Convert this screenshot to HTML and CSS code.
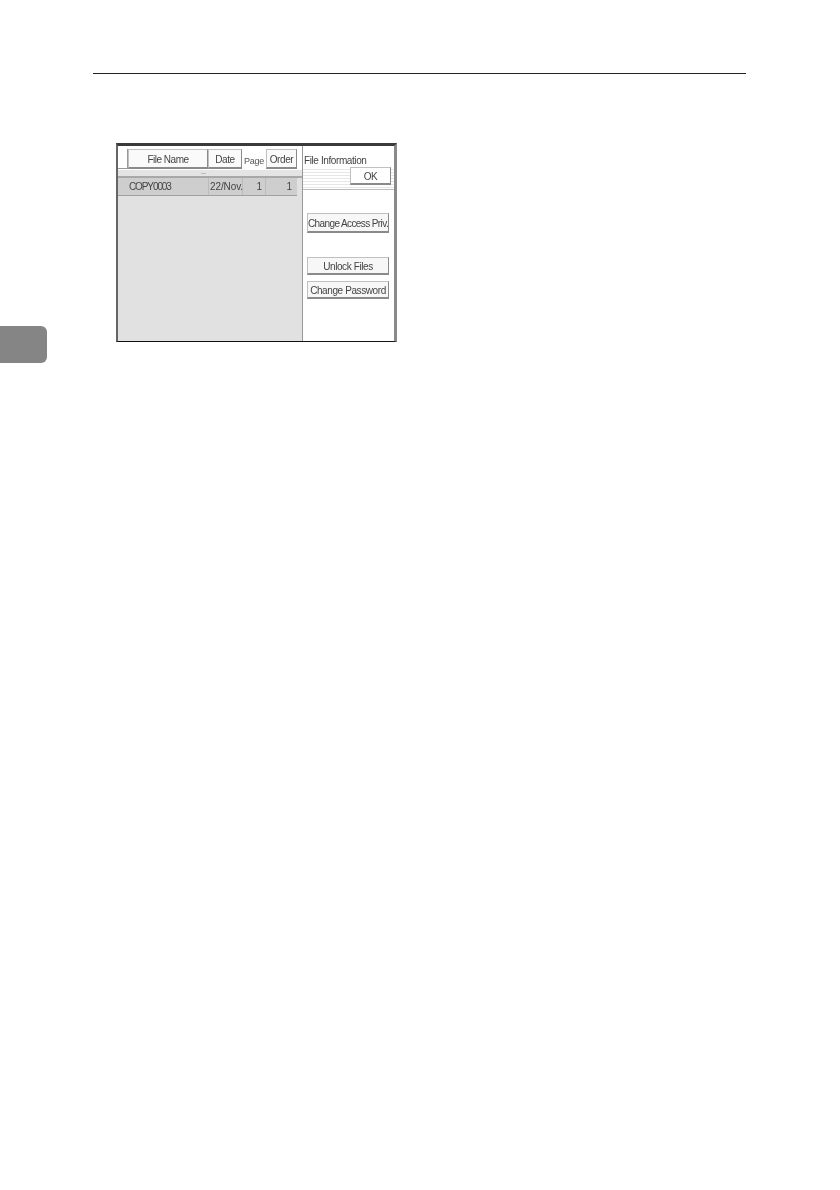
FILE: index.html
```html
<!DOCTYPE html>
<html lang="en">
<head>
<meta charset="utf-8">
<title>File Information</title>
<link rel="stylesheet" href="styles.css">
</head>
<body>
<div class="page">
  <div class="rule"></div>
  <div class="screen">
    <div class="list">
      <div class="heads">
        <span class="stub"></span>
        <span class="btn head name">File Name</span>
        <span class="btn head date">Date</span>
        <span class="page-label">Page</span>
        <span class="btn head order">Order</span>
      </div>
      <div class="sort"><span class="caret"></span></div>
      <div class="row">
        <span class="cell c-name">COPY0003</span>
        <span class="cell c-date">22/Nov.</span>
        <span class="cell c-page">1</span>
        <span class="cell c-order">1</span>
      </div>
    </div>
    <div class="info">
      <div class="info-title">File Information</div>
      <div class="ok-band"><span class="btn ok">OK</span></div>
      <div class="actions">
        <span class="btn action first">Change Access Priv.</span>
        <span class="btn action second">Unlock Files</span>
        <span class="btn action">Change Password</span>
      </div>
    </div>
  </div>
  <div class="tab"></div>
</div>
</body>
</html>
```
FILE: styles.css
```css
html, body { margin: 0; padding: 0; background: #fff; }
.page {
  width: 840px; height: 1190px; position: relative; overflow: hidden;
  font-family: "Liberation Sans", Arial, sans-serif; color: #444;
}
.rule { height: 1px; background: #222; margin: 73px 94px 0 93px; }
.screen {
  box-sizing: border-box; width: 281px; height: 199px; margin: 69px 0 0 116px;
  display: flex; background: #fff;
  border-top: 3px solid #3a3a3a; border-left: 2px solid #666;
  border-right: 3px solid #8a8a8a; border-bottom: 1px solid #111;
  filter: blur(0.3px);
}
.list { flex: 0 0 184px; background: #e1e1e1; display: flex; flex-direction: column; }
.heads { height: 24px; background: #fff; display: flex; align-items: flex-start; padding-top: 3px; box-sizing: border-box; }
.stub { width: 10px; height: 20px; box-sizing: border-box; border: solid #999; border-width: 0 1px 1px 0; }
.btn {
  box-sizing: border-box; display: flex; align-items: center; justify-content: center;
  padding-top: 1px;
  background: #fafafa; border: 1px solid #c0c0c0; border-right-color: #8a8a8a; border-bottom: 2px solid #8a8a8a;
  font-size: 10px; white-space: nowrap; letter-spacing: -0.4px;
}
.head { height: 20px; }
.name { width: 80px; letter-spacing: -0.5px; }
.date { width: 34px; }
.page-label { width: 24px; font-size: 9px; text-align: center; padding-top: 7px; color: #555; letter-spacing: -0.2px; }
.order { width: 31px; }
.sort { height: 8px; background: #e4e4e4; display: flex; justify-content: center; align-items: center; padding-right: 14px; box-sizing: border-box; border-bottom: 2px solid #a8a8a8; }
.caret { width: 5px; height: 1px; background: #bbb; }
.row {
  display: flex; height: 17px; margin-right: 5px; background: #cecece;
  border-bottom: 1px solid #a0a0a0; align-items: center; font-size: 10px;
}
.cell { box-sizing: border-box; height: 100%; display: flex; align-items: center; }
.c-name { width: 90px; padding-left: 11px; letter-spacing: -1.1px; }
.c-date { width: 35px; padding-left: 1px; border-left: 1px solid #bcbcbc; border-right: 1px solid #bcbcbc; letter-spacing: -0.1px; }
.c-page { width: 23px; justify-content: flex-end; padding-right: 3px; border-right: 1px solid #bcbcbc; }
.c-order { width: 31px; justify-content: flex-end; padding-right: 5px; }
.info { flex: 1 1 0; min-width: 0; border-left: 1px solid #999; display: flex; flex-direction: column; }
.info-title { height: 21px; font-size: 10px; padding: 9px 0 0 1px; box-sizing: border-box; line-height: 11px; white-space: nowrap; letter-spacing: -0.4px; }
.ok-band {
  height: 23px; box-sizing: border-box; display: flex; justify-content: flex-end; padding: 0 3px 4px 0;
  border-bottom: 1px solid #bbb;
  background: repeating-linear-gradient(#fff 0 2px, #e6e6e6 2px 3px);
}
.ok { width: 41px; height: 18px; background: #fff; }
.actions { display: flex; flex-direction: column; padding: 23px 5px 0 4px; }
.action { height: 18px; background: #f7f7f7; }
.first { height: 20px; margin-bottom: 24px; letter-spacing: -0.6px; }
.second { margin-bottom: 6px; }
.tab { position: absolute; left: 0; top: 326px; width: 47px; height: 37px; background: #858585; border-radius: 0 6px 6px 0; }
```
